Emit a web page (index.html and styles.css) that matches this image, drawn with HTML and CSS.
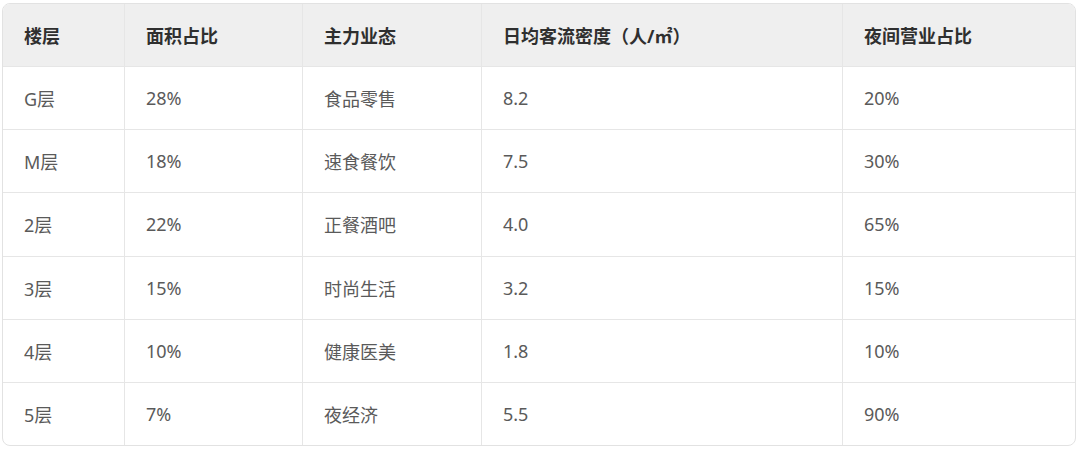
FILE: index.html
```html
<!DOCTYPE html>
<html lang="zh-CN">
<head>
<meta charset="utf-8">
<title>楼层业态</title>
<link rel="stylesheet" href="styles.css">
</head>
<body>
<div class="table-wrap">
  <table class="data-table">
    <colgroup>
      <col class="c1"><col class="c2"><col class="c3"><col class="c4"><col class="c5">
    </colgroup>
    <thead>
      <tr><th>楼层</th><th>面积占比</th><th>主力业态</th><th>日均客流密度（人/㎡）</th><th>夜间营业占比</th></tr>
    </thead>
    <tbody>
      <tr><td>G层</td><td>28%</td><td>食品零售</td><td>8.2</td><td>20%</td></tr>
      <tr><td>M层</td><td>18%</td><td>速食餐饮</td><td>7.5</td><td>30%</td></tr>
      <tr><td>2层</td><td>22%</td><td>正餐酒吧</td><td>4.0</td><td>65%</td></tr>
      <tr><td>3层</td><td>15%</td><td>时尚生活</td><td>3.2</td><td>15%</td></tr>
      <tr><td>4层</td><td>10%</td><td>健康医美</td><td>1.8</td><td>10%</td></tr>
      <tr><td>5层</td><td>7%</td><td>夜经济</td><td>5.5</td><td>90%</td></tr>
    </tbody>
  </table>
</div>
</body>
</html>
```

FILE: styles.css
```css
html, body {
  margin: 0;
  padding: 0;
  background: #ffffff;
}
body {
  padding: 3px 0 0 2px;
  font-family: "Noto Sans", "Noto Sans CJK SC", sans-serif;
}
.table-wrap {
  width: 1072px;
  border: 1px solid #e2e2e2;
  border-radius: 8px;
  overflow: hidden;
}
.data-table {
  width: 1072px;
  table-layout: fixed;
  border-collapse: separate;
  border-spacing: 0;
}
.c1 { width: 122px; }
.c2 { width: 178px; }
.c3 { width: 179px; }
.c4 { width: 361px; }
.c5 { width: 232px; }
.data-table th,
.data-table td {
  padding: 0 0 0 21px;
  text-align: left;
  vertical-align: middle;
  font-size: 18px;
  border-right: 1px solid #e6e6e6;
  border-bottom: 1px solid #e6e6e6;
  white-space: nowrap;
}
.data-table th {
  height: 62px;
  background: #efefef;
  color: #2f2f2f;
  font-weight: 700;
}
.data-table td {
  height: 62.2px;
  color: #5a5a5a;
  font-weight: 400;
}
.data-table th:last-child,
.data-table td:last-child {
  border-right: none;
}
.data-table tbody tr:last-child td {
  border-bottom: none;
}
```
